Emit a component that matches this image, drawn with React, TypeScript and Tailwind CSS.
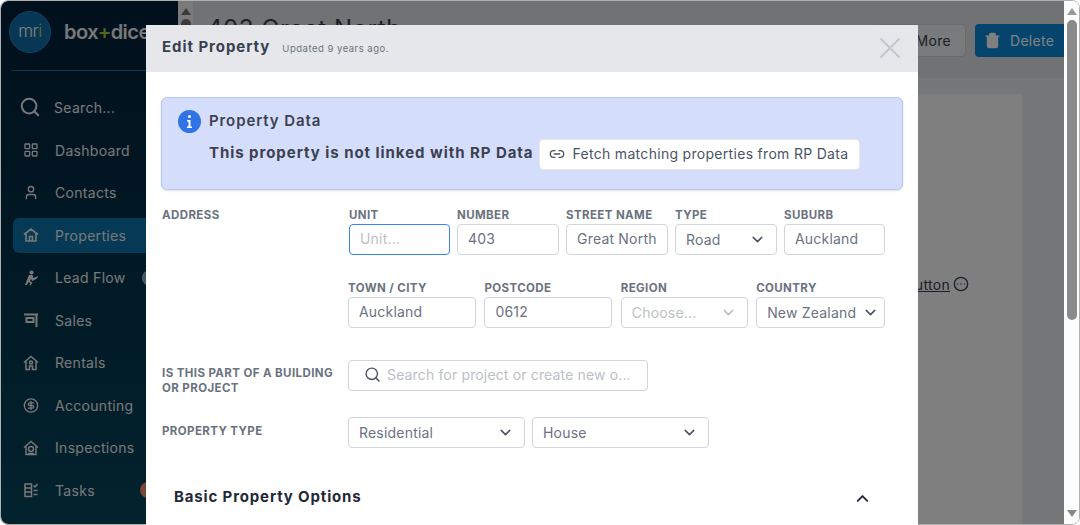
import { ChevronDown, ChevronUp, CircleDollarSign, CircleEllipsis, LayoutGrid, Link2, Search, Trash2, User, X } from 'lucide-react';
import type { ReactNode } from 'react';

const FONT = "font-['Inter','Open_Sans',sans-serif]";

function HomeIcon() {
  return (
    <svg width="16" height="16" viewBox="0 0 16 16" fill="none" stroke="currentColor" strokeWidth="1.6">
      <path d="M1 7.5 8 2l7 5.5M3 6.500V14h10V6.500M6.500 14V9.500h3V14" />
    </svg>
  );
}

function LeadFlowIcon() {
  return (
    <svg width="16" height="16" viewBox="0 0 16 16" fill="currentColor">
      <circle cx="8.500" cy="2.500" r="2" />
      <path d="M6 5h3.500l1 3 4.500-2-1 2.500-4.500 2.500L8 9l-1 2 2.500 1.500-2 3-1-.5 1-2-2-1-1.500 3H2L4.500 8.500z" />
    </svg>
  );
}

function SalesIcon() {
  return (
    <svg width="16" height="16" viewBox="0 0 16 16" fill="none" stroke="currentColor" strokeWidth="2">
      <path d="M1 2.500h14M13.500 2.500V15M3.500 6h7v4h-7z" />
    </svg>
  );
}

function RentalsIcon() {
  return (
    <svg width="16" height="16" viewBox="0 0 16 16" fill="none" stroke="currentColor" strokeWidth="1.500">
      <path d="M1 7.500 8 1.500l7 6M3 6.500V14.500h3.500V11h3v3.500H13V6.500" />
      <circle cx="8" cy="7.500" r="1.500" />
    </svg>
  );
}

function InspectionsIcon() {
  return (
    <svg width="16" height="16" viewBox="0 0 16 16" fill="none" stroke="currentColor" strokeWidth="1.400">
      <path d="M1 7.500 8 1.500l7 6M3 6.500V14.500h10V6.500" />
      <circle cx="8" cy="9" r="2.500" />
      <path d="M5 13.500h6" />
    </svg>
  );
}

function TasksIcon() {
  return (
    <svg width="16" height="16" viewBox="0 0 16 16" fill="none" stroke="currentColor" strokeWidth="1.500">
      <path d="M2 2h6.500v12.500H2zM2 6h6.500M2 10h6.500M10.500 3.500l1.500 1.500 2.500-3M10.500 8.500h4M10.500 12.500h4" />
    </svg>
  );
}

const navItems: { label: string; icon: ReactNode; active?: boolean; badge?: string }[] = [
  { label: 'Dashboard', icon: <LayoutGrid size={16} strokeWidth={2} /> },
  { label: 'Contacts', icon: <User size={17} strokeWidth={2} /> },
  { label: 'Properties', icon: <HomeIcon />, active: true },
  { label: 'Lead Flow', icon: <LeadFlowIcon />, badge: 'bg-[#8fb0d0]' },
  { label: 'Sales', icon: <SalesIcon /> },
  { label: 'Rentals', icon: <RentalsIcon /> },
  { label: 'Accounting', icon: <CircleDollarSign size={17} strokeWidth={2} /> },
  { label: 'Inspections', icon: <InspectionsIcon /> },
  { label: 'Tasks', icon: <TasksIcon />, badge: 'bg-[#f08a70]' },
];

function Sidebar() {
  return (
    <aside className="w-[177px] shrink-0 bg-gradient-to-b from-[#022038] to-[#04465c] rounded-l-lg text-[#f0f0f0] overflow-hidden">
      <div className="flex items-center h-[62px] pl-[8px] gap-[13px]">
        <div className="w-[42px] h-[42px] rounded-full bg-[#0f6ea8] border border-[#1d86c4] flex items-center justify-center text-[17px] font-light tracking-tight text-white shrink-0">
          m<span>r</span><span className="text-[#b6e05a]">i</span>
        </div>
        <div className="text-[20px] font-semibold tracking-[-0.5px] whitespace-nowrap">
          box<span className="text-[#a8c832]">+</span>dice
        </div>
      </div>
      <div className="ml-[10px] mt-[7px] h-px bg-[#1a6a9a]" />
      <div className="flex items-center h-[42px] mt-[15px] pl-[18px] gap-[13px] text-[14px] tracking-[0.3px]">
        <Search size={22} strokeWidth={2.200} />
        <span>Search...</span>
      </div>
      <nav className="flex flex-col mt-[1px] ml-[12px]">
        {navItems.map((item) => (
          <div key={item.label} className={`flex items-center h-[42.500px] pl-[10px] gap-[16px] text-[14px] tracking-[0.3px] whitespace-nowrap ${item.active ? 'relative' : ''}`}>
            {item.active && <div className="absolute left-0 right-0 top-[4px] bottom-[4px] bg-[#0a72ac] rounded-l-md" />}
            <span className="relative w-[16px] flex justify-center">{item.icon}</span>
            <span className="relative">{item.label}</span>
            {item.badge && <span className={`ml-auto mr-[22px] w-[16px] h-[16px] shrink-0 rounded-full ${item.badge}`} />}
          </div>
        ))}
      </nav>
    </aside>
  );
}

function Background() {
  return (
    <div className="flex-1 min-w-0 flex bg-[#eceef0]">
      <div className="w-[15px] shrink-0 bg-[#f4f4f4] flex flex-col items-center pt-[7px]">
        <div className="w-0 h-0 border-x-[5px] border-x-transparent border-b-[7px] border-b-[#777]" />
        <div className="mt-[4px] w-[10px] h-[120px] rounded-full bg-[#777]" />
      </div>
      <div className="flex-1 min-w-0 flex flex-col">
        <div className="h-[77px] flex items-start justify-between pl-[14px] pt-[10px] bg-[#e2e4e6]">
          <div className="text-[24px] tracking-[0.6px] text-[#374151]">403 Great North</div>
          <div className="flex gap-[9px] mt-[13px]">
            <div className="h-[33px] w-[90px] flex items-center justify-end pr-[14px] bg-[#f3f4f6] border border-[#d1d5db] rounded text-[14px] tracking-[0.3px] text-[#374151]">More</div>
            <div className="h-[33px] w-[89px] flex items-center gap-[9px] pl-[9px] bg-[#0a8adb] rounded-l text-[14px] tracking-[0.3px] text-white">
              <Trash2 size={17} fill="currentColor" />
              Delete
            </div>
          </div>
        </div>
        <div className="flex-1 mt-[16px] mr-[42px] ml-[18px] bg-white flex items-start justify-end pr-[53px] pt-[180px]">
          <span className="text-[14px] tracking-[0.3px] text-[#374151] underline">button</span>
          <CircleEllipsis size={16} className="ml-[3px] mt-[2px] text-[#374151]" />
        </div>
      </div>
    </div>
  );
}

function Label({ children }: { children: ReactNode }) {
  return <div className="text-[11.500px] leading-[15px] tracking-[0.4px] font-bold text-[#6b7280] whitespace-nowrap">{children}</div>;
}

function Field({ label, value, placeholder, focused, className }: { label: string; value?: string; placeholder?: string; focused?: boolean; className: string }) {
  return (
    <div className={className}>
      <Label>{label}</Label>
      <div
        className={`mt-[1px] h-[31px] flex items-center pl-[10px] pb-[2px] rounded border text-[14px] tracking-[0.2px] whitespace-nowrap overflow-hidden ${focused ? 'border-[#3b82f6]' : 'border-[#d1d5db]'} ${value ? 'text-[#6b7280]' : 'text-[#bcc0c7]'}`}
      >
        {value ?? placeholder}
      </div>
    </div>
  );
}

function SelectBox({ value, muted, className, tight }: { value: string; muted?: boolean; className: string; tight?: boolean }) {
  return (
    <div className={`h-[31px] flex items-center justify-between pl-[10px] rounded border border-[#d1d5db] text-[14px] tracking-[0.2px] whitespace-nowrap ${tight ? 'pr-[5px]' : 'pr-[10px]'} ${muted ? 'text-[#bcc0c7]' : 'text-[#6b7280]'} ${className}`}>
      {value}
      <ChevronDown size={17} strokeWidth={2.200} className={muted ? 'text-[#bcc0c7]' : 'text-[#4b5563]'} />
    </div>
  );
}

function SelectField({ label, value, muted, tight, className }: { label: string; value: string; muted?: boolean; tight?: boolean; className: string }) {
  return (
    <div className={className}>
      <Label>{label}</Label>
      <SelectBox value={value} muted={muted} tight={tight} className="mt-[1px]" />
    </div>
  );
}

function Modal() {
  return (
    <div className="absolute left-[146px] top-[25px] w-[772px] h-[500px] bg-white overflow-hidden">
      <div className="h-[47px] bg-[#e5e7eb] flex items-center pl-[16px] pr-[10px] pb-[2px]">
        <span className="text-[15px] tracking-[0.95px] font-bold text-[#374151]">Edit Property</span>
        <span className="ml-[12px] mt-[3px] text-[9.500px] tracking-[0.5px] text-[#6b7280]">Updated 9 years ago.</span>
        <X size={36} strokeWidth={1.400} className="ml-auto text-[#c4c8ce]" />
      </div>
      <div className="px-[15px] pt-[25px]">
        <div className="h-[93px] bg-[#d4defa] border border-[#b6c9f5] rounded-md shadow-sm pl-[16px] pt-[12px] flex gap-[8px]">
          <svg width="23" height="23" viewBox="0 0 23 23" className="shrink-0">
            <circle cx="11.500" cy="11.500" r="11.500" fill="#2f73e6" />
            <circle cx="11.500" cy="6.500" r="1.500" fill="#fff" />
            <path d="M9 10h3.500v6.500H14V18H9v-1.500h1.500V11.500H9z" fill="#fff" />
          </svg>
          <div>
            <div className="h-[22px] flex items-center text-[15px] tracking-[0.9px] font-semibold text-[#3c4050]">Property Data</div>
            <div className="flex items-center gap-[5px] mt-[7px]">
              <span className="text-[15px] tracking-[0.95px] font-bold text-[#3c4050] -translate-y-[1px]">This property is not linked with RP Data</span>
              <div className="h-[31px] w-[321px] bg-white border border-[#e5e7eb] rounded flex items-center pl-[9px] pb-[2px] gap-[8px] text-[14px] tracking-[0.3px] text-[#4b5563] whitespace-nowrap">
                <Link2 size={16} strokeWidth={2} />
                Fetch matching properties from RP Data
              </div>
            </div>
          </div>
        </div>

        <div className="flex mt-[18px]">
          <div className="w-[187px] shrink-0 pl-[1px]">
            <Label>ADDRESS</Label>
          </div>
          <div className="w-[537px]">
            <div className="flex gap-[7px] ml-[1px]">
              <Field label="UNIT" placeholder="Unit..." focused className="w-[101px]" />
              <Field label="NUMBER" value="403" className="w-[102px]" />
              <Field label="STREET NAME" value="Great North" className="w-[102px]" />
              <SelectField label="TYPE" value="Road" className="w-[102px]" />
              <Field label="SUBURB" value="Auckland" className="w-[101px]" />
            </div>
            <div className="flex gap-[8.500px] mt-[26px]">
              <Field label="TOWN / CITY" value="Auckland" className="w-[128px]" />
              <Field label="POSTCODE" value="0612" className="w-[128px]" />
              <SelectField label="REGION" value="Choose..." muted className="w-[127px]" />
              <SelectField label="COUNTRY" value="New Zealand" tight className="w-[129px]" />
            </div>
          </div>
        </div>

        <div className="flex items-start mt-[32px]">
          <div className="w-[187px] shrink-0 pl-[1px] pt-[6px]">
            <Label>IS THIS PART OF A BUILDING</Label>
            <Label>OR PROJECT</Label>
          </div>
          <div className="w-[300px] h-[31px] flex items-center gap-[6px] pl-[15px] pb-[2px] rounded border border-[#d1d5db] text-[14px] tracking-[0.15px] text-[#bcc0c7] whitespace-nowrap overflow-hidden">
            <Search size={17} strokeWidth={2} className="text-[#4b5563] shrink-0" />
            Search for project or create new o...
          </div>
        </div>

        <div className="flex items-start mt-[21px]">
          <div className="w-[187px] shrink-0 pl-[1px] pt-[7px]">
            <Label>PROPERTY TYPE</Label>
          </div>
          <div className="flex gap-[7px]">
            <SelectBox value="Residential" className="w-[177px]" />
            <SelectBox value="House" className="w-[177px]" />
          </div>
        </div>

        <div className="flex items-center justify-between mt-[38px] pl-[13px] pr-[31px]">
          <span className="text-[15px] tracking-[0.85px] font-bold text-[#1f2937]">Basic Property Options</span>
          <ChevronUp size={19} strokeWidth={2.400} className="text-[#1f2937] mt-[3px]" />
        </div>
      </div>
    </div>
  );
}

export default function App() {
  return (
    <div className={`relative w-[1080px] h-[525px] overflow-hidden bg-white ${FONT}`}>
      <div className="relative h-full flex border border-[#b0b0b0] rounded-lg overflow-hidden">
        <Sidebar />
        <Background />
        <div className="w-[15px] shrink-0 bg-white" />
        <div className="absolute left-0 top-0 bottom-0 right-[15px] bg-black/50" />
        <div className="absolute right-0 top-0 bottom-0 w-[15px] flex flex-col items-center bg-[#fdfdfd]">
          <div className="mt-[7px] w-0 h-0 border-x-[5px] border-x-transparent border-b-[7px] border-b-[#999]" />
          <div className="mt-[5px] w-[10px] h-[300px] rounded-full bg-[#8a8a8a]" />
          <div className="mt-auto mb-[7px] w-0 h-0 border-x-[5px] border-x-transparent border-t-[7px] border-t-[#888]" />
        </div>
      </div>
      <Modal />
    </div>
  );
}
